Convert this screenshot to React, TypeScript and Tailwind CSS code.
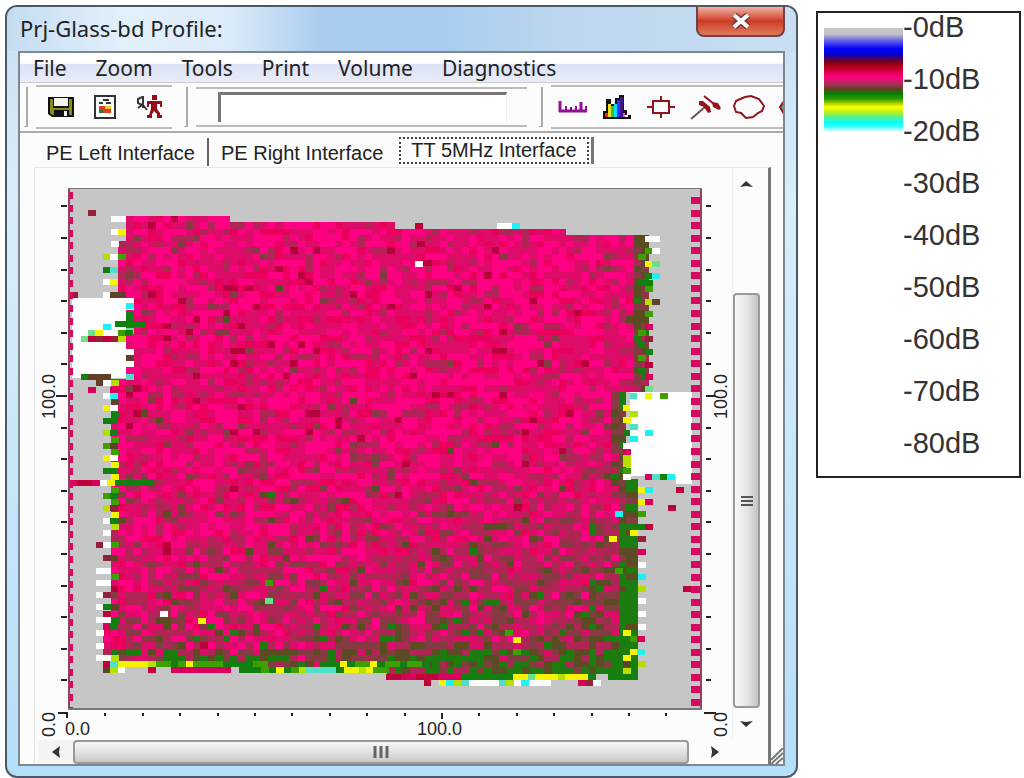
import type { ReactNode } from "react";

// dark red, crimson, pink, magenta, mauve, brown, olive, green
const LEVELS = ["#b8003a", "#ea005c", "#ff0082", "#dc0c68", "#b02456", "#863a42", "#5c4c24", "#1c7c10"];

const COLORS: Record<string, string> = {
	w: "#ffffff",
	y: "#f4f400",
	l: "#b4e000",
	m: "#6ee08c",
	c: "#20f0f0",
	t: "#50e0c8",
	g: "#128010",
	G: "#3ca000",
	b: "#604028",
	r: "#c00038",
	p: "#d8005c",
	d: "#96203c",
	s: "#c6c6c6",
};

const CELL_W = 7.47;
const CELL_H = 6.27;
const OFFSET_X = -2;
const OFFSET_Y = -3.3;

// [x, y, cells] in plot pixels, one letter per cell
const MARKS: [number, number, string][] = [
	[20, 22, "d"], [43, 28, "ww"], [43, 41, "wy"], [43, 53, "w"], [35, 66, "lwG"], [35, 79, "gt"],
	[35, 91, "wy"], [35, 104, "wbb"], [2, 104, "d"], [58, 110, "w"], [58, 116, "w"], [58, 115, "c"], [58, 123, "g"], [58, 129, "g"],
	[47, 133, "gggg"], [58, 140, "m"], [35, 136, "c"], [20, 142, "myw"], [50, 142, "Gg"], [13, 148, "mrdrdl"],
	[58, 161, "w"], [58, 167, "b"], [58, 173, "w"], [58, 186, "t"], [13, 186, "gbbb"],
	[28, 192, "bwl"], [20, 199, "p"], [35, 199, "sp"], [35, 205, "wc"], [43, 211, "b"],
	[35, 217, "yw"], [43, 224, "g"], [35, 230, "gg"], [35, 242, "lg"], [43, 249, "G"],
	[35, 255, "Gb"], [43, 261, "G"], [35, 267, "yw"], [43, 274, "y"], [35, 280, "gg"],
	[43, 286, "y"], [2, 292, "prrpwyggggg"], [43, 299, "G"], [35, 305, "Gg"], [43, 311, "G"],
	[35, 317, "ld"], [43, 324, "y"], [35, 330, "wg"], [43, 336, "l"], [35, 342, "w"],
	[28, 354, "dwG"], [35, 367, "db"], [28, 380, "ww"], [43, 386, "G"], [28, 392, "ww"],
	[28, 404, "wd"], [28, 416, "wgb"], [35, 423, "r"], [28, 429, "wwg"], [28, 442, "w"],
	[35, 436, "pg"], [28, 455, "w"], [28, 467, "wwl"], [35, 473, "rt"], [43, 473, "tyyyylGGgGyGGGGggggGG"],
	[35, 479, "blws"], [58, 479, "sssrsspppppppp"], [171, 479, "gggGgygGlttttgyylyGG"], [257, 473, "ggygGGygGGgGGg"],
	[347, 73, "w"], [347, 35, "r"], [429, 35, "wwc"], [92, 423, "w"], [130, 430, "y"],
	[197, 392, "G"], [197, 410, "m"], [577, 48, "ww"], [577, 60, "Gw"], [570, 66, "G"],
	[577, 73, "ym"], [577, 85, "gc"], [570, 92, "gg"], [577, 98, "G"], [577, 111, "lb"],
	[577, 123, "G"], [577, 136, "p"], [570, 142, "G"], [577, 148, "d"], [570, 154, "g"], [577, 161, "g"],
	[570, 167, "G"], [577, 174, "r"], [570, 180, "g"], [577, 186, "p"], [577, 198, "m"],
	[562, 205, "twywG"], [555, 217, "yw"], [562, 223, "l"], [555, 229, "y"], [562, 236, "t"],
	[555, 242, "gwwc"], [562, 248, "c"], [555, 255, "w"], [555, 261, "p"], [555, 267, "l"],
	[555, 273, "l"], [555, 280, "G"], [555, 286, "w"], [577, 286, "ptgc"], [570, 299, "yc"],
	[608, 299, "r"], [570, 311, "yp"], [600, 317, "r"], [547, 323, "c"], [570, 323, "G"],
	[570, 336, "gr"], [562, 342, "y"], [570, 348, "d"], [541, 348, "y"], [570, 361, "p"],
	[570, 374, "w"], [547, 380, "G"], [570, 386, "c"], [570, 398, "l"], [615, 398, "rr"],
	[570, 410, "w"], [570, 423, "w"], [570, 436, "w"], [555, 442, "y"], [562, 448, "Gp"],
	[562, 461, "yc"], [555, 467, "y"], [555, 473, "bgl"], [555, 480, "l"], [540, 486, "gggg"],
	[437, 442, "G"], [445, 449, "y"], [445, 461, "G"], [318, 486, "rrpprrrpppgggggggyymyyylyyyg"],
	[356, 492, "rsycltwwwwtlwcwwwss"], [510, 492, "pdw"],
];

function noise(x: number, y: number) {
	let h = Math.imul(x + 17, 374761393) ^ Math.imul(y + 71, 668265263);
	h = Math.imul(h ^ (h >>> 13), 1274126177);
	h = Math.imul(h ^ (h >>> 15), 2246822519);
	return ((h ^ (h >>> 16)) >>> 0) / 4294967296;
}

function rightEdge(row: number) {
	return row < 33 ? 77 : row < 47 ? 74 : 75;
}

function insideSpecimen(col: number, row: number) {
	const top = col < 22 ? 5 : col < 44 ? 6 : col < 67 ? 7 : 8;
	const left = row < 9 ? 8 : row < 18 ? 7 : row < 31 ? 8 : row < 68 ? 6 : 5;
	const bottom = col < 43 ? 76 : 77;
	return row >= top && row <= bottom && col >= left && col <= rightEdge(row);
}

function buildSpecimen() {
	const paths = LEVELS.map(() => "");
	for (let row = 0; row < 84; row++) {
		for (let col = 0; col < 85; col++) {
			if (!insideSpecimen(col, row)) continue;
			const n = noise(col, row) + noise(col + 200, row) + noise(col >> 1, row + 200);
			const low = Math.max(0, (row - 38) / 38);
			const across = col / 76;
			const fromEdge = rightEdge(row) - col;
			let value = 2.3 + (n - 1.5) * (1.8 + low) + low * (1.1 + across * 1.6);
			if (row < 50 && noise(col + 400, row) > 0.99) value = 0;
			if (noise(col + 600, row) > 0.96) value += 1.8;
			if (row > 73) value += 1.5;
			if (fromEdge < 6) value += 0.6;
			if (fromEdge < 2) value += 2.4;
			const level = Math.min(7, Math.max(0, Math.round(value)));
			const x = Math.round(col * CELL_W + OFFSET_X);
			const y = Math.round(row * CELL_H + OFFSET_Y);
			const overlap = fromEdge === 0 && row > 46 ? 4 : 0;
			const w = Math.round((col + 1) * CELL_W + OFFSET_X) - x + overlap;
			const h = Math.round((row + 1) * CELL_H + OFFSET_Y) - y;
			paths[level] += `M${x} ${y}h${w}v${h}h${-w}z`;
		}
	}
	return paths;
}

const SPECIMEN = buildSpecimen();
const EDGE_ROWS = Array.from({ length: 42 }, (_, i) => 7 + i * 12.55);

function ScanPlot() {
	return (
		<svg
			viewBox="-30 -20 694 572"
			className="block w-full font-['Liberation_Sans',Arial,sans-serif]"
			role="img"
			aria-label="TT 5MHz Interface"
		>
			<svg x="0" y="0" width="634" height="522" viewBox="0 0 634 522" shapeRendering="crispEdges">
				<rect width="634" height="522" fill="#c6c6c6" />
				{SPECIMEN.map((d, i) => (
					<path key={LEVELS[i]} d={d} fill={LEVELS[i]} />
				))}
				<path d="M4 110H58V190H4zM562 204H624V296H608V288H562z" fill="#fff" />
				{MARKS.map(([x, y, cells]) =>
					cells.split("").map((c, i) => (
						<rect key={`${x}-${y}-${i}`} x={x + Math.round(i * CELL_W)} y={y} width="8" height="6" fill={COLORS[c]} />
					)),
				)}
				{EDGE_ROWS.map((y) => (
					<g key={y} fill="#d80860">
						<rect x="1" y={y - 3} width="4" height="7" />
						<rect x="623" y={y + 2} width="9" height="7" />
					</g>
				))}
				<path d="M0 0V522M633 0V522" stroke="#94405c" strokeWidth="3" />
				<path d="M0 0H634M0 521H634" stroke="#777" strokeWidth="2" />
			</svg>
			<g stroke="#222" strokeWidth="2" shapeRendering="crispEdges">
				{Array.from({ length: 16 }, (_, i) => i + 1).map((i) => (
					<g key={i}>
						<path d={i === 10 ? "M-12 208H-1M638 208H648" : `M-7 ${524 - i * 31.6}h6M638 ${524 - i * 31.6}h5`} />
						<path d={`M${i * 37.4} 525v${i === 10 ? 6 : 3}`} />
					</g>
				))}
				<path d="M-10 525H-1V530M636 525H648" fill="none" />
			</g>
			<g fill="#222" fontSize="18">
				<text x="-3" y="547">0.0</text>
				<text x="349" y="547">100.0</text>
				<text transform="translate(-13 231) rotate(-90)">100.0</text>
				<text transform="translate(-13 549) rotate(-90)">0.0</text>
				<text transform="translate(659 231) rotate(-90)">100.0</text>
				<text transform="translate(659 549) rotate(-90)">0.0</text>
			</g>
		</svg>
	);
}

function SaveIcon() {
	return (
		<svg width="28" height="24" viewBox="0 0 28 24">
			<path d="M1 2H27V22H5L1 19z" fill="#111" />
			<path d="M3 4H6V13H22V4H25V20H22V15H7V20H5L3 18z" fill="#8a8a1c" />
			<path d="M7 3H21V11H7z" fill="#f4f4f0" />
			<path d="M17 16H20V21H17z" fill="#eee" />
		</svg>
	);
}

function ReportIcon() {
	return (
		<svg width="22" height="24" viewBox="0 0 22 24">
			<path d="M1 1H21V23H1z" fill="#fff" stroke="#333" strokeWidth="2" />
			<path d="M9 5H15M5 8H9M12 8H17" stroke="#333" strokeWidth="2" />
			<path d="M5 11H17V18H5z" fill="#e33c18" />
			<path d="M11 11H17V14H11z" fill="#efc540" />
			<path d="M5 15H9V18H5z" fill="#267b38" />
		</svg>
	);
}

function ExitIcon() {
	return (
		<svg width="26" height="24" viewBox="0 0 26 24">
			<path d="M6 2L2 4V8L6 10L2 13M7 1V13M7 10L11 15" fill="none" stroke="#333" strokeWidth="2" />
			<path d="M16 0H21V5H16zM11 6H26V12H24V9H21V14L24 18V20H26V23H21V19L18 16L16 19V23H11V20H13L15 14V9H13V12H11z" fill="#970d17" />
		</svg>
	);
}

function RulerIcon() {
	return (
		<svg width="30" height="12" viewBox="0 0 30 12">
			<path d="M2 0V10H29M8 5V10M13 6V10M18 5V10M23 1V10M28 5V10" fill="none" stroke="#920f93" strokeWidth="2" />
			<path d="M2 0V11M23 1V11M1 10H29" stroke="#920f93" strokeWidth="3" />
		</svg>
	);
}

function HistogramIcon() {
	return (
		<svg width="28" height="25" viewBox="0 0 28 25" shapeRendering="crispEdges">
			<path d="M0 24V16H3V4H8V9H12V3H16V0H21V15H24V20H28V24z" fill="#111" />
			<path d="M2 18H5V22H2z" fill="#ed2720" />
			<path d="M5 9H8V22H5z" fill="#f4df20" />
			<path d="M8 11H11V22H8z" fill="#25ca35" />
			<path d="M11 9H14V22H11z" fill="#13d8ee" />
			<path d="M14 5H17V22H14z" fill="#243cff" />
			<path d="M17 2H20V22H17z" fill="#42168b" />
			<path d="M20 18H22V22H20z" fill="#e84ce5" />
			<path d="M22 20H25V22H22z" fill="#fff" />
		</svg>
	);
}

function CrosshairIcon() {
	return (
		<svg width="28" height="22" viewBox="0 0 28 22">
			<path d="M6 5H22V17H6zM14 0V5M14 17V22M0 11H6M22 11H28" fill="none" stroke="#8d171d" strokeWidth="2" />
		</svg>
	);
}

function PinIcon() {
	return (
		<svg width="31" height="25" viewBox="0 0 31 25">
			<path d="M1 24L15 12" fill="none" stroke="#6c5050" strokeWidth="2" />
			<path d="M14 1L24 9" fill="none" stroke="#951019" strokeWidth="2" />
			<path d="M9 6L13 6L20 12L21 17L18 18L14 12L9 10zM22 7L28 8L31 13L29 15L23 12z" fill="#951019" />
		</svg>
	);
}

function RegionIcon() {
	return (
		<svg width="32" height="24" viewBox="0 0 32 24">
			<path d="M5 5L12 2L18 1L26 4L31 11L29 16L25 18L20 22L13 23L8 18L3 17L1 11L3 6z" fill="none" stroke="#8d171d" strokeWidth="2" />
		</svg>
	);
}

function MoreIcon() {
	return (
		<svg width="28" height="20" viewBox="0 0 28 20">
			<path d="M1 10L5 4H24V17H5z" fill="#5aa89c" stroke="#8d171d" strokeWidth="2" />
		</svg>
	);
}

function ToolButton({ label, children }: { label: string; children: ReactNode }) {
	return (
		<button type="button" aria-label={label} className="flex w-11 shrink-0 items-center justify-center">
			{children}
		</button>
	);
}

function Grip() {
	return <div className="h-10 w-1 shrink-0 border-r-2 border-b border-[#aaa]" />;
}

function Toolbar() {
	return (
		<div className="flex h-[50px] items-center overflow-hidden border-b-2 border-[#aaa] bg-[#fcfcfc] pl-1">
			<Grip />
			<div className="ml-2 flex h-11 w-[136px] shrink-0 border-y-2 border-[#bbb] pl-[3px]">
				<ToolButton label="Save"><SaveIcon /></ToolButton>
				<ToolButton label="Report"><ReportIcon /></ToolButton>
				<ToolButton label="Exit"><ExitIcon /></ToolButton>
			</div>
			<div className="ml-3"><Grip /></div>
			<div className="ml-2 h-10 min-w-0 flex-1 border-y-2 border-[#bbb] pt-[3px] pr-5 pl-[22px]">
				<input
					type="text"
					aria-label="Message"
					className="block h-[30px] w-full border-t-3 border-r border-l-3 border-[#777] border-r-[#eee] bg-white px-2"
				/>
			</div>
			<div className="ml-3"><Grip /></div>
			<div className="ml-2 flex h-11 w-[232px] shrink-0 overflow-hidden border-y-2 border-[#bbb]">
				<ToolButton label="Ruler"><RulerIcon /></ToolButton>
				<ToolButton label="Histogram"><HistogramIcon /></ToolButton>
				<ToolButton label="Crosshair"><CrosshairIcon /></ToolButton>
				<ToolButton label="Pin"><PinIcon /></ToolButton>
				<ToolButton label="Region"><RegionIcon /></ToolButton>
				<ToolButton label="More"><MoreIcon /></ToolButton>
			</div>
		</div>
	);
}

function VerticalScroll() {
	return (
		<div className="flex w-7 shrink-0 flex-col items-center border-l border-[#f0f0f0]">
			<button type="button" aria-label="Scroll up" className="flex h-8 w-full items-center justify-center">
				<svg width="13" height="6" viewBox="0 0 13 6"><path d="M0 6L6 0L13 6L6 5z" fill="#333" /></svg>
			</button>
			<div className="flex w-full flex-1 flex-col pt-[93px]">
				<div className="flex flex-1 items-center justify-center rounded-sm border-2 border-[#999] bg-linear-to-r from-[#f8f8f8] via-[#e6e6e6] to-[#c4c4c4]">
					<svg width="12" height="12" viewBox="0 0 12 12"><path d="M0 2H12M0 6H12M0 10H12" stroke="#555" strokeWidth="2" /></svg>
				</div>
			</div>
			<button type="button" aria-label="Scroll down" className="flex h-8 w-full items-center justify-center">
				<svg width="13" height="6" viewBox="0 0 13 6"><path d="M0 0L6 1L13 0L6 6z" fill="#333" /></svg>
			</button>
		</div>
	);
}

function HorizontalScroll() {
	return (
		<div className="flex h-6 pr-[27px]">
			<button type="button" aria-label="Scroll left" className="flex w-[35px] items-center justify-center bg-[#f4f4f4]">
				<svg width="8" height="12" viewBox="0 0 8 12"><path d="M8 0L0 6L8 12L7 6z" fill="#333" /></svg>
			</button>
			<div className="flex flex-1 items-center justify-center rounded-sm border-2 border-[#999] bg-linear-to-b from-[#f8f8f8] via-[#e2e2e2] to-[#c8c8c8]">
				<svg width="16" height="12" viewBox="0 0 16 12"><path d="M2 0V12M8 0V12M14 0V12" stroke="#666" strokeWidth="3" /></svg>
			</div>
			<button type="button" aria-label="Scroll right" className="flex w-[52px] items-center justify-center">
				<svg width="8" height="12" viewBox="0 0 8 12"><path d="M0 0L8 6L0 12L1 6z" fill="#333" /></svg>
			</button>
		</div>
	);
}

function ProfileWindow() {
	const menus = ["File", "Zoom", "Tools", "Print", "Volume", "Diagnostics"];
	return (
		<main className="min-w-0 flex-1 overflow-hidden rounded-xl border-2 border-[#4c5865] bg-linear-to-b from-[#c9dff2] via-[#d8edfb] via-25% to-[#b5def8]">
			<header className="flex h-11 items-start justify-between bg-[linear-gradient(to_right,#c4dcf2_0%,#e2f0fa_15%,#dcebf9_28%,#aaccee_40%,#a8cdf0_55%,#bcd6ee_70%,#c8def2_100%)] px-[11px]">
				<h1 className="pt-[7px] pl-[2px] font-['Noto_Sans',sans-serif] text-[22px] leading-7 text-[#222]">Prj-Glass-bd Profile:</h1>
				<button type="button" aria-label="Close" className="flex h-[30px] w-[89px] items-center justify-center rounded-b-lg border-2 border-t-0 border-[#71404a] bg-linear-to-b from-[#efb0a4] via-[#cc3824] via-50% to-[#e07a5c]">
					<svg width="20" height="16" viewBox="0 0 20 16">
						<path d="M3 2L17 14M17 2L3 14" stroke="#703c3c" strokeWidth="7" />
						<path d="M3 2L17 14M17 2L3 14" stroke="#fff" strokeWidth="4" />
					</svg>
				</button>
			</header>
			<div className="mx-[11px] mb-[10px] border-2 border-[#7b8791] bg-[#fcfcfc]">
				<nav className="flex h-[30px] items-center gap-[29px] border-b border-[#ccc] bg-linear-to-b from-white from-35% via-[#dce2f5] via-40% to-[#e9edf9] pl-[13px] font-['Noto_Sans',sans-serif] text-[21px] leading-7 text-[#222]">
					{menus.map((menu) => (
						<button type="button" key={menu}>{menu}</button>
					))}
				</nav>
				<Toolbar />
				<div role="tablist" className="flex h-[34px] items-center pl-[19px] font-['Liberation_Sans',Arial,sans-serif] text-[20px] text-[#222]">
					<button type="button" role="tab" aria-selected={false} className="mt-[3px] h-7 border-r-2 border-[#666] pr-3 pl-[7px]">PE Left Interface</button>
					<button type="button" role="tab" aria-selected={false} className="mt-[3px] h-7 px-3">PE Right Interface</button>
					<button type="button" role="tab" aria-selected={true} className="ml-1 border-r-3 border-[#777] pr-[2px]">
						<span className="block border-2 border-dotted border-[#444] px-[10px] leading-[23px]">TT 5MHz Interface</span>
					</button>
				</div>
				<div className="flex">
					<div className="ml-[14px] min-w-0 flex-1 border-t border-r-3 border-l border-[#e8e8e8] border-r-[#777] pl-[3px]">
						<div className="flex pr-2">
							<div className="min-w-0 flex-1"><ScanPlot /></div>
							<VerticalScroll />
						</div>
						<HorizontalScroll />
					</div>
					<svg width="12" height="16" viewBox="0 0 12 16" className="self-end">
						<path d="M0 12L12 0M0 16L12 5M5 16L12 10" stroke="#777" strokeWidth="2" />
					</svg>
				</div>
			</div>
		</main>
	);
}

function Legend() {
	const labels = ["-0dB", "-10dB", "-20dB", "-30dB", "-40dB", "-50dB", "-60dB", "-70dB", "-80dB"];
	return (
		<aside className="mt-[6px] flex w-[205px] shrink-0 self-start border-2 border-[#222] pb-[19px] pl-[6px]">
			<div className="mt-[15px] h-[104px] w-[79px] bg-[linear-gradient(to_bottom,#c8c8c8_0%,#c0c0c8_6%,#6464e8_12%,#0000ff_20%,#0000d0_25%,#700020_32%,#b00018_37%,#ff0080_47%,#a83058_54%,#604020_59%,#008000_63%,#309800_68%,#ffff00_76%,#b8f020_81%,#60f080_85%,#00ffff_91%,#40ffff_95%,#ffffff_100%)]" />
			<ul className="flex flex-col gap-6 font-['Liberation_Sans',Arial,sans-serif] text-[29px] leading-7 text-[#333]">
				{labels.map((label) => (
					<li key={label}>{label}</li>
				))}
			</ul>
		</aside>
	);
}

export default function App() {
	return (
		<div className="flex gap-[18px] bg-white pt-[5px] pr-[3px] pl-[5px]">
			<ProfileWindow />
			<Legend />
		</div>
	);
}
